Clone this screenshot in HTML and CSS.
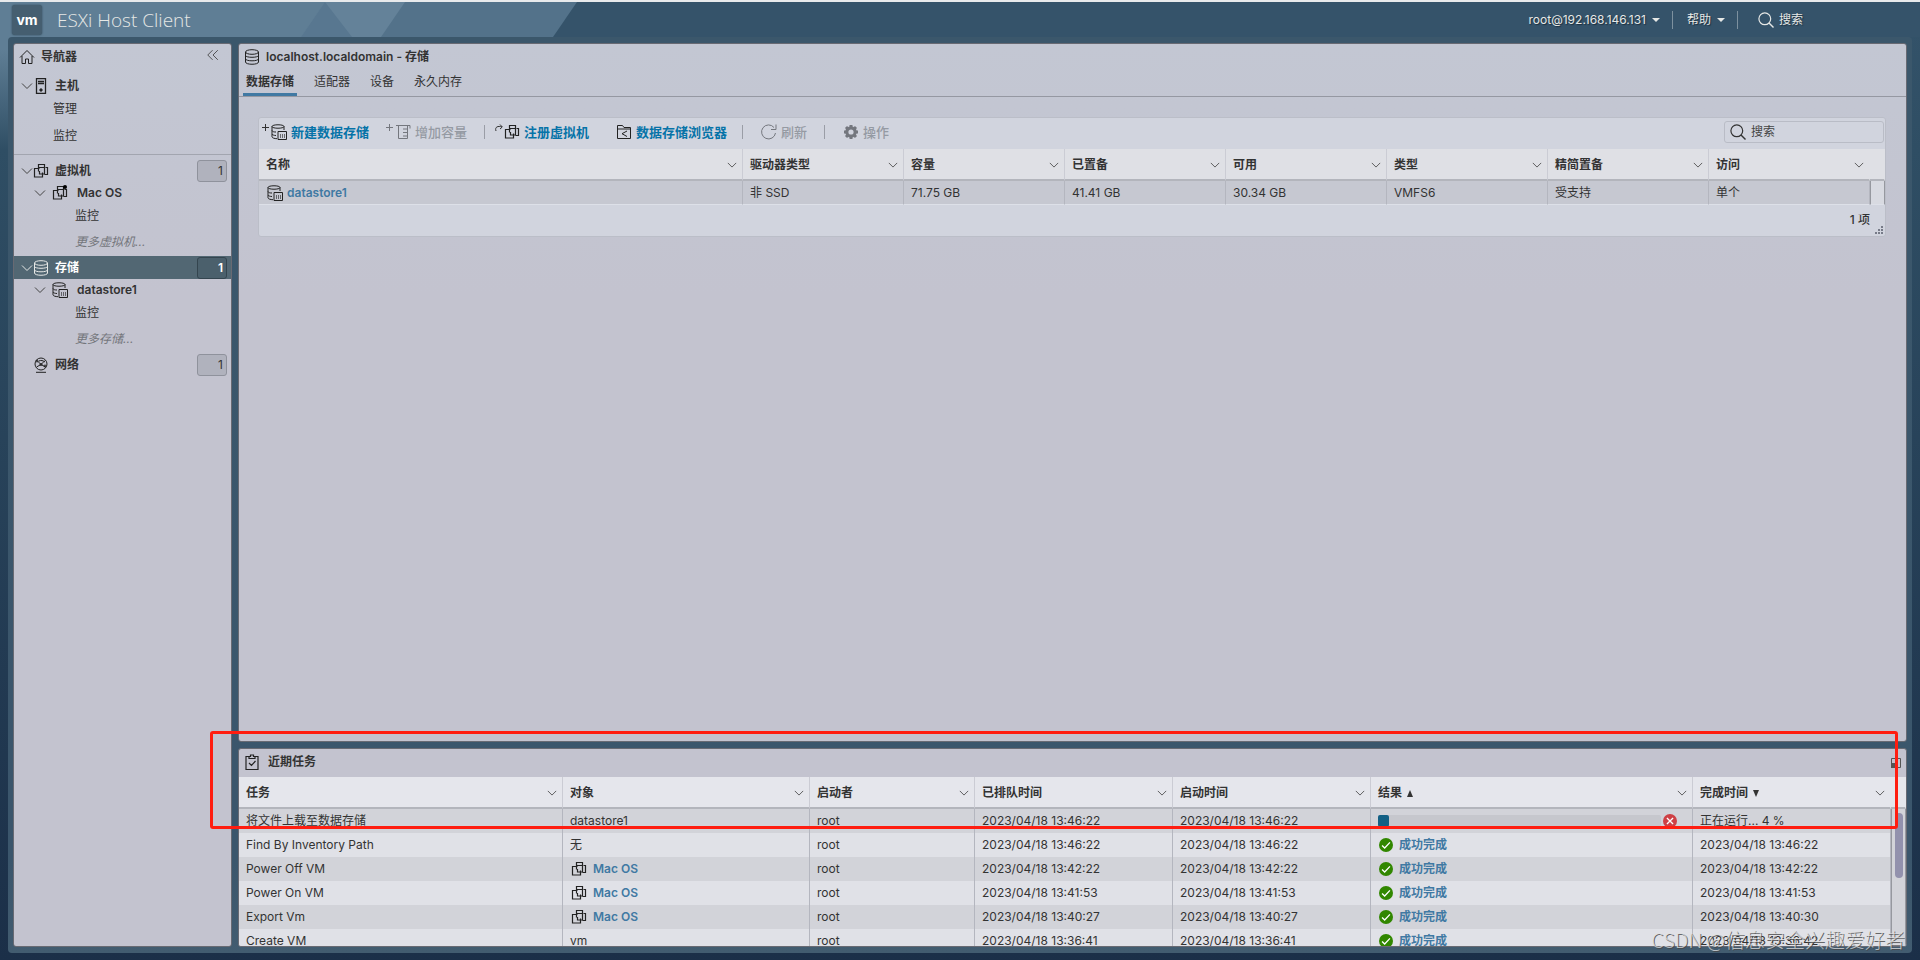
FILE: index.html
```html
<!DOCTYPE html>
<html lang="zh-CN">
<head>
<meta charset="utf-8">
<title>ESXi Host Client</title>
<link rel="stylesheet" href="styles.css">
</head>
<body>

    <!-- icons -->
    <svg class="sprite" aria-hidden="true">
        <symbol id="i-home" viewBox="0 0 16 16"><path d="M1 8.500 8 1.500l7 7M3 7v7.500h3.500V10h3v4.500H13V7"/></symbol>
        <symbol id="i-collapse" viewBox="0 0 16 16"><path d="M7.500 2.500 2 8l5.500 5.500M13.500 2.500 8 8l5.500 5.500"/></symbol>
        <symbol id="i-down" viewBox="0 0 12 12"><path d="M1 3.500 6 8.500l5-5"/></symbol>
        <symbol id="i-host" viewBox="0 0 16 16"><path d="M3.500.7h9v14.600h-9zM5 3.500h6M5 5.500h6" stroke-width="1.300"/><circle cx="8" cy="12" r="1.200" fill="currentColor"/></symbol>
        <symbol id="i-vm" viewBox="0 0 16 16"><path d="M5.500 5.500v-4h6V4M12.500 4.500h2v7h-3M6.500 5.500h-5v8.500h8V9.500M5.500 8.500v-4h6v6.500h-5V8" stroke-width="1.200"/></symbol>
        <symbol id="i-disk" viewBox="0 0 16 16"><ellipse cx="8" cy="3" rx="6.500" ry="2.300"/><path d="M1.500 3v10c0 3 13 3 13 0V3M1.500 6.500c.5 2.400 12.500 2.400 13 0M1.500 10c.5 2.400 12.500 2.400 13 0"/></symbol>
        <symbol id="i-store" viewBox="0 0 16 16"><path d="M1 2.500c0-2.300 12-2.300 12 0s-12 2.300-12 0v10.300c.3 1.300 2.500 1.800 5 1.900M13 2.500V6M1 6.500C1.500 7.800 3 8 5 8M1 10c.5 1 2 1.400 4 1.500M7 7.500h8.500v8H7z"/><path d="M9.500 10v4M11.500 10v4M13.500 10v4" opacity=".6"/></symbol>
        <symbol id="i-net" viewBox="0 0 16 16"><circle cx="8" cy="7" r="6"/><path d="m4 3.500 4 4 4-4M8 7.500 3.500 10M8 7.500l4.500 2.500M3 15.300h10M6 4c2-1 4-.5 6 1"/><circle cx="4" cy="4" r="1"/><circle cx="8" cy="7.500" r="1"/><circle cx="12" cy="9" r="1"/></symbol>
        <symbol id="i-grow" viewBox="0 0 16 16"><path d="M1 1.500h14v3M3.500 1.500v13h9v-13M8 5h4M8 8.500h4M8 12h4"/></symbol>
        <symbol id="i-folder" viewBox="0 0 16 16"><path d="M1.500 14.500v-13h5l1.500 2h6.500v11zM1.500 5h13M11 7 6 9.700l5 2.800"/></symbol>
        <symbol id="i-refresh" viewBox="0 0 16 16"><path d="M14.500 9A7 7 0 1 1 13 3.500M15 .5v5h-5"/></symbol>
        <symbol id="i-gear" viewBox="0 0 16 16"><circle cx="8" cy="8" r="4.200" stroke-width="3.200"/><path d="M8 1v2M8 13v2M1 8h2M13 8h2M3 3l1.500 1.500M11.500 11.500 13 13M13 3l-1.500 1.500M4.500 11.500 3 13" stroke-width="3"/></symbol>
        <symbol id="i-search" viewBox="0 0 16 16"><circle cx="6.800" cy="6.800" r="5.900" stroke-width="1.200"/><path d="m11 11 4.500 4.500" stroke-width="1.400"/></symbol>
        <symbol id="i-redo" viewBox="0 0 8 8"><path d="M1 7C-.5 3 3 1.500 7 3M5 .5 7.300 3 5 5"/></symbol>
        <symbol id="i-plus" viewBox="0 0 8 8"><path d="M3.500 0v7M0 3.500h7"/></symbol>
        <symbol id="i-tasks" viewBox="0 0 16 16"><path d="M5 2.500H2v13h12v-13h-3M5 4.500v-2h1.500V1h3v1.500H11v2zM5 9l2.500 2.500L11.500 7" stroke-width="1.200"/></symbol>
        <symbol id="i-ok" viewBox="0 0 16 16"><circle cx="8" cy="8" r="8" fill="#318700" stroke="none"/><path d="m3.500 8.500 3 3 6-6.500" stroke="#fff" stroke-width="1.500"/></symbol>
        <symbol id="i-cancel" viewBox="0 0 16 16"><circle cx="8" cy="8" r="8" fill="#ce4045" stroke="none"/><path d="m4.500 4.500 7 7M11.500 4.500l-7 7" stroke="#fff" stroke-width="1.500"/></symbol>
    </svg>

    <header class="topbar">
        <svg class="topbar-art" width="600" height="35" aria-hidden="true">
            <path d="M0 0h577l-24 35H0z" fill="#53728a"/>
            <path d="M0 0h405l-24 35H0z" fill="#648299"/>
            <path d="M0 0h325l-24 35H0z" fill="#5f7e95"/>
            <path d="M325 0l27 35h-51z" fill="#587790"/>
        </svg>
        <div class="logo">vm</div>
        <h1>ESXi Host Client</h1>
        <div class="user-menu">
            <button type="button">root@192.168.146.131 <span class="caret"></span></button>
            <button type="button">帮助 <span class="caret"></span></button>
            <button type="button" class="top-search"><svg class="icon-lg"><use href="#i-search"/></svg>搜索</button>
        </div>
    </header>

    <div class="shell">

        <nav class="panel navigator">
            <div class="panel-title">
                <svg class="icon"><use href="#i-home"/></svg>
                <h2>导航器</h2>
                <button type="button" class="collapse" aria-label="折叠"><svg class="icon"><use href="#i-collapse"/></svg></button>
            </div>
            <div class="tree host-tree">
                <a href="#" class="node"><svg class="chev"><use href="#i-down"/></svg><svg class="icon"><use href="#i-host"/></svg><b>主机</b></a>
                <a href="#" class="leaf">管理</a>
                <a href="#" class="leaf tall">监控</a>
            </div>
            <div class="tree">
                <a href="#" class="node"><svg class="chev"><use href="#i-down"/></svg><svg class="icon"><use href="#i-vm"/></svg><b>虚拟机</b><span class="count">1</span></a>
                <a href="#" class="node sub"><svg class="chev"><use href="#i-down"/></svg><span class="powered"><svg class="icon"><use href="#i-vm"/></svg></span><b>Mac OS</b></a>
                <a href="#" class="leaf sub">监控</a>
                <a href="#" class="leaf sub more">更多虚拟机...</a>
                <a href="#" class="node selected"><svg class="chev"><use href="#i-down"/></svg><svg class="icon"><use href="#i-disk"/></svg><b>存储</b><span class="count">1</span></a>
                <a href="#" class="node sub"><svg class="chev"><use href="#i-down"/></svg><svg class="icon"><use href="#i-store"/></svg><b>datastore1</b></a>
                <a href="#" class="leaf sub">监控</a>
                <a href="#" class="leaf sub more">更多存储...</a>
                <a href="#" class="node"><span class="chev"></span><svg class="icon"><use href="#i-net"/></svg><b>网络</b><span class="count">1</span></a>
            </div>
        </nav>

        <div class="content">

            <main class="panel storage">
                <div class="panel-title">
                    <svg class="icon"><use href="#i-disk"/></svg>
                    <h2>localhost.localdomain - 存储</h2>
                </div>
                <div class="tabs">
                    <a href="#" class="active">数据存储</a>
                    <a href="#">适配器</a>
                    <a href="#">设备</a>
                    <a href="#">永久内存</a>
                </div>

                <div class="grid">
                    <div class="toolbar">
                        <button type="button"><svg class="mini"><use href="#i-plus"/></svg><svg class="icon"><use href="#i-store"/></svg>新建数据存储</button>
                        <button type="button" disabled><svg class="mini"><use href="#i-plus"/></svg><svg class="icon"><use href="#i-grow"/></svg>增加容量</button>
                        <span class="sep short"></span>
                        <button type="button"><svg class="mini"><use href="#i-redo"/></svg><svg class="icon"><use href="#i-vm"/></svg>注册虚拟机</button>
                        <button type="button" class="browse"><svg class="icon"><use href="#i-folder"/></svg>数据存储浏览器</button>
                        <span class="sep"></span>
                        <button type="button" disabled><svg class="icon-lg"><use href="#i-refresh"/></svg>刷新</button>
                        <span class="sep"></span>
                        <button type="button" disabled><svg class="icon"><use href="#i-gear"/></svg>操作</button>
                        <label class="search"><svg class="icon-lg"><use href="#i-search"/></svg><input type="text" placeholder="搜索" aria-label="搜索"></label>
                    </div>
                    <table class="stores">
                        <colgroup><col><col class="w-store"><col class="w-store"><col class="w-store"><col class="w-store"><col class="w-store"><col class="w-store"><col class="w-store"><col class="w-bar"></colgroup>
                        <thead>
                            <tr>
                                <th><div>名称<svg class="chev"><use href="#i-down"/></svg></div></th>
                                <th><div>驱动器类型<svg class="chev"><use href="#i-down"/></svg></div></th>
                                <th><div>容量<svg class="chev"><use href="#i-down"/></svg></div></th>
                                <th><div>已置备<svg class="chev"><use href="#i-down"/></svg></div></th>
                                <th><div>可用<svg class="chev"><use href="#i-down"/></svg></div></th>
                                <th><div>类型<svg class="chev"><use href="#i-down"/></svg></div></th>
                                <th><div>精简置备<svg class="chev"><use href="#i-down"/></svg></div></th>
                                <th class="last"><div>访问<svg class="chev"><use href="#i-down"/></svg></div></th>
                                <th class="last"></th>
                            </tr>
                        </thead>
                        <tbody>
                            <tr>
                                <td><a href="#" class="obj"><svg class="icon"><use href="#i-store"/></svg>datastore1</a></td>
                                <td>非 SSD</td>
                                <td>71.75 GB</td>
                                <td>41.41 GB</td>
                                <td>30.34 GB</td>
                                <td>VMFS6</td>
                                <td>受支持</td>
                                <td>单个</td>
                                <td class="track"></td>
                            </tr>
                        </tbody>
                    </table>
                    <div class="grid-foot">1 项
                        <svg class="grip" width="8" height="8"><path d="M6 0h2v2H6zM3 3h2v2H3zM6 3h2v2H6zM0 6h2v2H0zM3 6h2v2H3zM6 6h2v2H6z" fill="#777b88" stroke="none"/></svg>
                    </div>
                </div>
            </main>

            <section class="panel recent">
                <div class="panel-title">
                    <svg class="icon"><use href="#i-tasks"/></svg>
                    <h2>近期任务</h2>
                    <button type="button" class="restore" aria-label="还原"><svg width="10" height="10"><path d="M.5.5h9v9h-9z"/><path d="M0 5h5v5H0z" fill="#555" stroke="none"/></svg></button>
                </div>
                <table class="tasks">
                    <colgroup><col><col class="w-target"><col class="w-user"><col class="w-time"><col class="w-time"><col class="w-result"><col class="w-time"><col class="w-bar"></colgroup>
                    <thead>
                        <tr>
                            <th><div>任务<svg class="chev"><use href="#i-down"/></svg></div></th>
                            <th><div>对象<svg class="chev"><use href="#i-down"/></svg></div></th>
                            <th><div>启动者<svg class="chev"><use href="#i-down"/></svg></div></th>
                            <th><div>已排队时间<svg class="chev"><use href="#i-down"/></svg></div></th>
                            <th><div>启动时间<svg class="chev"><use href="#i-down"/></svg></div></th>
                            <th><div>结果<span class="sort up"></span><svg class="chev"><use href="#i-down"/></svg></div></th>
                            <th class="last"><div>完成时间<span class="sort"></span><svg class="chev"><use href="#i-down"/></svg></div></th>
                            <th class="last"></th>
                        </tr>
                    </thead>
                    <tbody>
                        <tr>
                            <td>将文件上载至数据存储</td><td>datastore1</td><td>root</td><td>2023/04/18 13:46:22</td><td>2023/04/18 13:46:22</td>
                            <td><div class="running"><div class="bar"><div class="fill" style="width:4%"></div></div><button type="button" aria-label="取消"><svg class="status"><use href="#i-cancel"/></svg></button></div></td>
                            <td>正在运行... 4 %</td>
                            <td class="track" rowspan="6"><div class="thumb"></div></td>
                        </tr>
                        <tr>
                            <td>Find By Inventory Path</td><td>无</td><td>root</td><td>2023/04/18 13:46:22</td><td>2023/04/18 13:46:22</td>
                            <td><a href="#" class="done"><svg class="status"><use href="#i-ok"/></svg>成功完成</a></td><td>2023/04/18 13:46:22</td>
                        </tr>
                        <tr>
                            <td>Power Off VM</td><td><a href="#" class="obj"><svg class="icon"><use href="#i-vm"/></svg>Mac OS</a></td><td>root</td><td>2023/04/18 13:42:22</td><td>2023/04/18 13:42:22</td>
                            <td><a href="#" class="done"><svg class="status"><use href="#i-ok"/></svg>成功完成</a></td><td>2023/04/18 13:42:22</td>
                        </tr>
                        <tr>
                            <td>Power On VM</td><td><a href="#" class="obj"><svg class="icon"><use href="#i-vm"/></svg>Mac OS</a></td><td>root</td><td>2023/04/18 13:41:53</td><td>2023/04/18 13:41:53</td>
                            <td><a href="#" class="done"><svg class="status"><use href="#i-ok"/></svg>成功完成</a></td><td>2023/04/18 13:41:53</td>
                        </tr>
                        <tr>
                            <td>Export Vm</td><td><a href="#" class="obj"><svg class="icon"><use href="#i-vm"/></svg>Mac OS</a></td><td>root</td><td>2023/04/18 13:40:27</td><td>2023/04/18 13:40:27</td>
                            <td><a href="#" class="done"><svg class="status"><use href="#i-ok"/></svg>成功完成</a></td><td>2023/04/18 13:40:30</td>
                        </tr>
                        <tr>
                            <td>Create VM</td><td>vm</td><td>root</td><td>2023/04/18 13:36:41</td><td>2023/04/18 13:36:41</td>
                            <td><a href="#" class="done"><svg class="status"><use href="#i-ok"/></svg>成功完成</a></td><td>2023/04/18 13:36:42</td>
                        </tr>
                    </tbody>
                </table>
            </section>

        </div>

        <div class="highlight"></div>
    </div>

    <div class="watermark">CSDN @信息安全兴趣爱好者</div>

</body>
</html>
```
FILE: styles.css
```css
* {
    box-sizing: border-box;
}

body {
    margin: 0;
    height: 100vh;
    display: flex;
    flex-direction: column;
    overflow: hidden;
    border-top: 2px solid #e8eaec;
    background: linear-gradient(#5f7e95, #5f7e95 50px, #2f4e64 150px, #1b2f48) 0 0 / 50% 100% no-repeat,
        linear-gradient(#34536a, #2f4e64 150px, #1b2f48);
    font-family: Inter, "Noto Sans CJK SC", sans-serif;
    font-size: 12px;
    line-height: 16px;
    color: #333;
}

h1, h2 {
    margin: 0;
}

a {
    color: inherit;
    text-decoration: none;
}

button {
    display: flex;
    align-items: center;
    padding: 0;
    border: none;
    background: none;
    font: inherit;
    color: inherit;
}

svg {
    flex: none;
    fill: none;
    stroke: currentColor;
}

.sprite {
    position: absolute;
    width: 0;
    height: 0;
}

.icon,
.icon-lg {
    width: 16px;
    height: 16px;
}

.icon {
    color: #222;
}

.status {
    width: 14px;
    height: 14px;
}

.chev {
    width: 10px;
    height: 10px;
    color: #444;
}

/* top bar */
.topbar {
    position: relative;
    display: flex;
    align-items: center;
    flex: none;
    height: 35px;
    padding-left: 12px;
    background: #35536a;
    color: #e6e8e6;
}

.topbar-art {
    position: absolute;
    left: 0;
    top: 0;
    stroke: none;
}

.logo {
    position: relative;
    width: 30px;
    height: 30px;
    border-radius: 3px;
    background: #455e70;
    box-shadow: 0 0 2px #2c4355;
    color: #fff;
    font-size: 14px;
    font-weight: bold;
    line-height: 29px;
    text-align: center;
}

h1 {
    position: relative;
    margin-left: 15px;
    font-family: "Open Sans", sans-serif;
    font-size: 19px;
    font-weight: 300;
}

.user-menu {
    display: flex;
    margin-left: auto;
    padding-right: 117px;
}

.user-menu button {
    height: 18px;
    padding: 0 12px 0 14px;
    border-right: 1px solid #7d919f;
    text-shadow: 1px 1px 1px #1c2f3e;
}

.user-menu .top-search {
    gap: 5px;
    padding: 0 0 0 20px;
    border: none;
}

.caret {
    margin-left: 6px;
    border: 4px solid transparent;
    border-top-color: #e6e8e6;
    border-bottom: none;
}

/* layout */
.shell {
    position: relative;
    display: flex;
    flex: 1;
    gap: 6px;
    min-height: 0;
    margin: 0 8px 7px;
    padding: 6px 5px;
    border-radius: 4px;
    background: linear-gradient(#3b576b, #3b566c 90%, #425c70);
}

.content {
    display: flex;
    flex: 1;
    flex-direction: column;
    gap: 6px;
    min-width: 0;
}

.panel {
    border: 1px solid #686a73;
    border-radius: 3px;
    background: linear-gradient(#c3c7d3, #c3c3cf 250px);
    overflow: hidden;
}

.panel-title {
    display: flex;
    align-items: center;
    gap: 6px;
    height: 25px;
    padding: 0 11px 0 5px;
}

h2 {
    font-size: 12px;
    font-weight: 600;
}

/* navigator */
.navigator {
    flex: none;
    width: 219px;
}

.collapse {
    margin-left: auto;
    padding-bottom: 4px;
}

.collapse .icon {
    width: 14px;
    height: 14px;
    color: #444;
}

.tree {
    padding-top: 4px;
}

.host-tree {
    padding-top: 5px;
    padding-bottom: 2px;
    border-bottom: 1px solid #a2a5af;
}

.node,
.leaf {
    display: flex;
    align-items: center;
    height: 23px;
}

.node {
    padding: 0 4px 0 7px;
}

.node b {
    margin-left: 6px;
    font-weight: 600;
}

.node .chev {
    width: 12px;
    height: 12px;
}

.node.sub {
    padding-left: 20px;
    padding-bottom: 2px;
}

.node.sub b {
    margin-left: 9px;
}

.node.sub .icon {
    margin-left: 6px;
}

.powered {
    position: relative;
    display: flex;
}

.powered::after {
    content: "";
    position: absolute;
    right: 1px;
    top: 0;
    width: 4px;
    height: 4px;
    border-radius: 2px;
    background: #000;
}

.leaf {
    padding-left: 39px;
}

.leaf.sub {
    padding-left: 61px;
    padding-bottom: 1px;
}

.leaf.tall {
    height: 32px;
}

.leaf.more {
    height: 28px;
    color: #74767c;
    font-style: italic;
}

.count {
    width: 30px;
    height: 22px;
    margin-left: auto;
    padding-right: 3px;
    border: 1px solid #8f929c;
    border-radius: 3px;
    background: #b0b2bd;
    line-height: 20px;
    text-align: right;
}

.node.selected {
    background: #526773;
    color: #fff;
}

.selected .icon,
.selected .chev {
    color: #e6e8e6;
}

.selected .count {
    border-color: #34454f;
    background: #4b606c;
    font-weight: 600;
}

/* storage */
.storage {
    flex: 1;
    min-height: 0;
}

.tabs {
    display: flex;
    gap: 14px;
    height: 28px;
    padding-left: 4px;
    border-bottom: 1px solid #9598a2;
}

.tabs a {
    padding: 5px 3px 0;
}

.tabs .active {
    border-bottom: 3px solid #4079a3;
    font-weight: 600;
}

.grid {
    margin: 20px 20px 0 19px;
    border: 1px solid #bbbec8;
    border-radius: 3px;
    background: #d1d4de;
}

.toolbar {
    display: flex;
    align-items: center;
    height: 31px;
    padding: 0 1px 4px 3px;
    font-size: 13px;
}

.toolbar button {
    gap: 4px;
    margin-right: 17px;
    color: #0673a8;
    font-weight: 600;
}

.toolbar button:disabled {
    color: #959aa3;
    font-weight: 500;
}

.toolbar button:disabled svg {
    color: #74777e;
}

.toolbar .browse {
    margin-left: 10px;
    margin-right: 15px;
}

.toolbar .mini {
    width: 8px;
    height: 8px;
    margin: 0 -3px 8px 0;
    color: #333;
}

.sep {
    width: 1px;
    height: 14px;
    margin-right: 18px;
    background: #9a9da6;
}

.sep.short {
    margin-right: 10px;
}

.search {
    display: flex;
    align-items: center;
    gap: 5px;
    width: 160px;
    height: 22px;
    margin-left: auto;
    padding-left: 5px;
    border: 1px solid #b9bcc6;
    border-radius: 3px;
}

.search input {
    width: 100%;
    min-width: 0;
    padding: 0;
    border: none;
    outline: none;
    background: none;
    font: inherit;
    font-size: 12px;
}

.search input::placeholder {
    color: #444;
}

/* tables */
table {
    width: 100%;
    table-layout: fixed;
    border-collapse: separate;
    border-spacing: 0;
}

th, td {
    padding: 0 6px 0 7px;
    border-right: 1px solid #b4b6bf;
    text-align: left;
    white-space: nowrap;
}

th {
    height: 32px;
    padding-top: 2px;
    padding-right: 5px;
    border-right-color: #cbccd4;
    border-bottom: 2px solid #b3b5bc;
    background: #e5e6ec;
    font-weight: 600;
}

th div {
    display: flex;
    align-items: center;
}

th .chev {
    margin-left: auto;
}

th.last {
    border-right-color: transparent;
}

td {
    height: 24px;
}

.w-store { width: 161px; }
.w-target { width: 247px; }
.w-user { width: 165px; }
.w-time { width: 198px; }
.w-result { width: 322px; }
.w-bar { width: 15px; }

.stores th {
    background: #dfe0e5;
}

.stores td {
    border-bottom: 1px solid #dde0e8;
    background: #c6c8d1;
}

.stores .track,
.tasks .track {
    padding: 0;
    border-right: 1px solid #96989f;
    border-left: 1px solid #96989f;
    background: #d8dae1;
    vertical-align: top;
}

.tasks tr:nth-child(odd) td {
    background: #d2d3d9;
}

.tasks tr:nth-child(even) td {
    background: #e0e1e7;
}

.tasks tr .track {
    background: #dcdde3;
}

.obj, .done {
    display: flex;
    align-items: center;
    gap: 6px;
    color: #4079a3;
    font-weight: 600;
}

.obj .icon {
    margin-left: 1px;
}

.stores .obj {
    gap: 4px;
}

.done .status {
    margin-left: 1px;
}

.sort {
    margin-left: 5px;
    border: 3px solid transparent;
    border-top: 7px solid #333;
    border-bottom: none;
}

.sort.up {
    border-top: none;
    border-bottom: 7px solid #333;
}

.grid-foot {
    position: relative;
    height: 31px;
    padding: 7px 15px 0 0;
    font-weight: 500;
    text-align: right;
}

.grip {
    position: absolute;
    right: 2px;
    bottom: 2px;
}

/* recent tasks */
.recent {
    flex: none;
    height: 199px;
    background: #c3c3cf;
}

.recent .panel-title {
    gap: 8px;
    height: 28px;
    padding-right: 5px;
    padding-bottom: 3px;
}

.restore {
    margin-left: auto;
    padding-top: 3px;
    color: #555;
}

.running {
    display: flex;
    align-items: center;
    gap: 2px;
    padding-right: 9px;
}

.bar {
    flex: 1;
    height: 12px;
    border-radius: 2px;
    background: #c6c7cd;
}

.fill {
    height: 12px;
    border-radius: 2px;
    background: #136085;
}

.thumb {
    width: 8px;
    height: 65px;
    margin: 4px auto 0;
    border-radius: 4px;
    background: #9291ad;
}

/* red marker drawn over the upload task */
.highlight {
    position: absolute;
    left: 202px;
    right: 14px;
    bottom: 124px;
    height: 98px;
    border: 3px solid #ff1d10;
    border-radius: 3px;
    pointer-events: none;
}

.watermark {
    position: absolute;
    right: 15px;
    bottom: 6px;
    color: rgba(225, 225, 225, 0.75);
    font-family: "Noto Sans CJK SC", sans-serif;
    font-size: 20px;
    font-weight: 300;
    line-height: 28px;
    text-shadow: 1px 1px 0 rgba(70, 70, 70, 0.8);
    pointer-events: none;
}
```
